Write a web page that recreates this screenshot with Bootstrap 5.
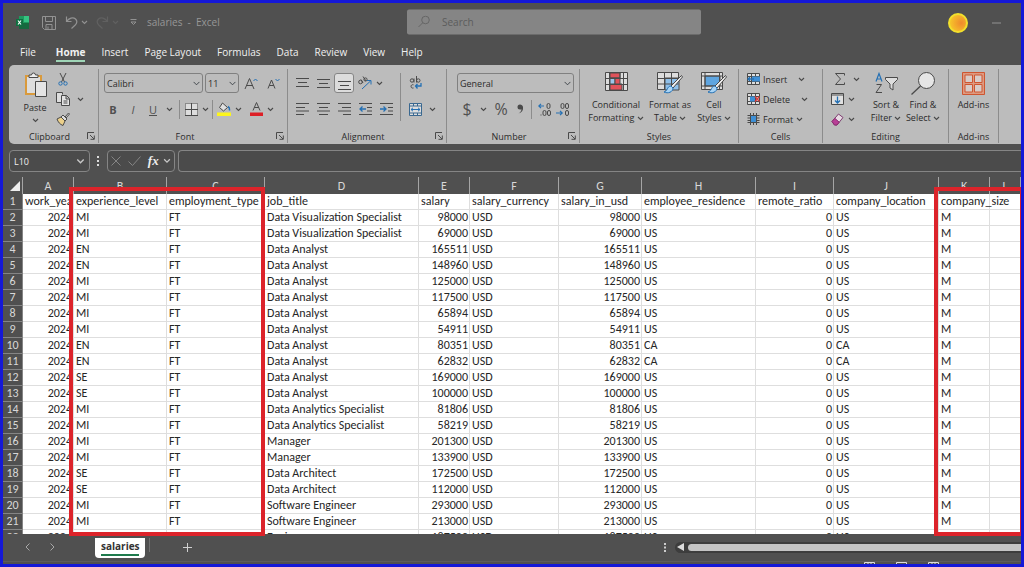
<!DOCTYPE html>
<html lang="en">
<head>
<meta charset="utf-8">
<meta name="viewport" content="width=device-width, initial-scale=1">
<title>salaries - Excel</title>
<link href="https://cdn.jsdelivr.net/npm/bootstrap@5.3.0/dist/css/bootstrap.min.css" rel="stylesheet">
<style>
  :root { --dark: #505050; --ribbon: #bcbcbc; --edge: #1418d8; --ink: #2b2b2b; --mark: #dc232a; }
  body { background: var(--dark); font: 9px/13px "Open Sans", "Noto Sans", sans-serif; color: var(--ink); }
  .window { height: 100vh; border: 3px solid var(--edge); }
  svg { display: block; flex: none; fill: none; stroke: #4a4a4a; }
  .tool { border: 0; background: none; padding: 0; color: inherit; display: flex; flex: none; align-items: center; justify-content: center; line-height: 13px; }
  .w12 { width: 12px; } .w14 { width: 14px; } .w20 { width: 20px; } .w24 { width: 24px; }

  .titlebar { height: 39px; font-size: 10px; color: #979797; padding: 0 20px 0 13px; }
  .titlebar svg { stroke: #929292; }
  .searchbox { width: 294px; height: 25px; background: #858585; border-radius: 2px; padding: 0 11px; gap: 12px; margin: -1px 0 0 42px; }
  .searchbox svg { stroke: #666; }
  .searchbox input { background: none; border: 0; padding: 0; outline: 0; color: #555; font-size: 10px; }
  .searchbox input::placeholder { color: #5c5c5c; opacity: 1; }
  .avatar { width: 20px; height: 20px; border: 2px solid #f2e02c; background: radial-gradient(circle at 70% 50%, #ef8a2c, #f6c02a 75%); }

  .tabs { height: 23px; padding-left: 17px; gap: 16px; font-size: 10px; }
  .tabs a { color: #f1f1f1; text-decoration: none; line-height: 21px; height: 20px; border-bottom: 2px solid transparent; }
  .tabs a.active { font-weight: 700; border-color: #9fd5b7; }

  .ribbon { height: 79px; margin-left: 6px; background: var(--ribbon); border-radius: 5px 0 0 5px; overflow: hidden; }
  .group { border-right: 1px solid #8c8c8c; margin: 4px 0 1px; height: 74px; display: flex; flex-direction: column; flex: none; }
  .group-body { height: 61px; }
  .group-name { height: 13px; line-height: 13px; text-align: center; position: relative; }
  .launcher { position: absolute; right: 3px; top: 2px; }
  .line { height: 20px; }
  .stack { display: flex; flex-direction: column; gap: 6px; }
  .vrule { width: 1px; height: 19px; background: #8c8c8c; flex: none; }
  .pick { height: 20px; border: 1px solid #808080; border-radius: 3px; font-size: 9px; line-height: 13px; padding: 2px 12px 2px 2px; color: var(--ink); background-color: transparent; background-position: right 2px center; background-size: 7px 7px; }
  .number-body { padding: 4px 5px 0 10px; }
  .pressed { background: #dcdcdc; border: 1px solid #858585; border-radius: 3px; height: 20px; }
  .glyph { font-size: 11px; color: #505050; }
  .tall { flex-direction: column; justify-content: flex-start; gap: 7px; padding-top: 3px; }
  .cell-tools .tool { gap: 3px; justify-content: flex-start; }
  .indents { gap: 1px; }

  .formula { height: 23px; margin: 6px 0 4px 6px; gap: 3px; }
  .field { border: 1px solid #858585; border-radius: 4px; height: 22px; background: #4b4b4b; }
  .field input { background: none; border: 0; outline: 0; padding: 0; color: #eee; font-size: 9px; min-width: 0; }
  .formula svg { stroke: #c8c8c8; }
  .fx-mark { font: italic 700 13px "Liberation Serif", serif; color: #eee; }

  .sheet { min-height: 0; position: relative; }
  .clip { height: 100%; overflow: hidden; background: #fff; }
  .cells { table-layout: fixed; width: 100%; border-collapse: separate; border-spacing: 0; font: 12px/15px Calibri, Carlito, Lato, sans-serif; color: #262626; }
  .cells td, .cells thead th, .cells tbody th { height: 16px; padding: 0 2px; border-right: 1px solid #dedede; border-bottom: 1px solid #dedede; white-space: nowrap; overflow: hidden; font-weight: 400; }
  .cells td.spill { overflow: visible; }
  .cells thead th, .cells tbody th { background: var(--dark); color: #d8d8d8; text-align: center; border-color: #858585; }
  .cells thead th { border-bottom: 0; height: 17px; line-height: 16px; border-color: #a5a5a5; }
  .cells td.num { text-align: right; padding-right: 1px; }
  .frame { position: absolute; top: 10px; bottom: -2px; border: 4px solid var(--mark); pointer-events: none; z-index: 2; }
  .frame-level { left: 66px; width: 196px; }
  .frame-size { left: 931px; right: -3px; }

  .sheetbar { height: 27px; }
  .sheetbar svg { stroke: #a8a8a8; }
  .sheet-tab { height: 20px; width: 50px; background: #fff; border-radius: 0 0 4px 4px; border: 0; font-size: 10px; font-weight: 700; color: #333; padding: 0 6px; }
  .sheet-tab span { display: block; border-bottom: 2px solid #1e7b4d; line-height: 15px; margin-top: -1px; }
  .track { height: 11px; background: #3d3d3d; border-radius: 6px 0 0 6px; padding: 2px 0 2px 2px; }
  .thumb { height: 7px; background: #c4c4c4; border-radius: 4px 0 0 4px; }
  .status { height: 3px; overflow: hidden; border-top: 1px solid #5c5c5c; gap: 21px; padding-right: 82px; }
  .status svg { stroke: #ddd; }
</style>
</head>
<body>
<svg width="0" height="0" class="position-absolute" aria-hidden="true">
  <symbol id="chev" viewBox="0 0 7 5"><path d="M1 1l2.5 2.5L6 1" stroke-width="1.1"/></symbol>
  <symbol id="launch" viewBox="0 0 8 8"><path d="M.5 7V.5H7M3 3l4 4M7.3 3.5v3.8H3.5"/></symbol>
</svg>
<div class="window d-flex flex-column overflow-hidden">

  <header class="titlebar d-flex align-items-center position-relative flex-shrink-0">
    <svg width="13" height="13" viewBox="0 0 13 13" style="stroke:none"><path d="M3 0h10v13H3z" fill="#1f9a5e"/><path d="M8 0h5v6H8z" fill="#35c481"/><path d="M3 7h10v6H3z" fill="#17693f"/><path d="M0 3h7v7H0z" fill="#0f7040"/><path d="M2 4.500l3 4M5 4.500l-3 4" stroke="#fff" stroke-width="1.1"/></svg>
    <button class="tool ms-2 w24" aria-label="Save"><svg width="14" height="14" viewBox="0 0 14 14"><path d="M.5.5h13v13h-11l-2-2zM3.500.5v5h7v-5M4 13.500v-5h6v5M6 10.500v3"/></svg></button>
    <button class="tool w20" aria-label="Undo"><svg width="13" height="13" viewBox="0 0 13 13"><path d="M1.500.5v5h5M1.500 5.500C4 2 8 .8 10.500 3c2 2 1.500 4.300-.5 6.300L6.500 12.500" stroke-width="1.2"/></svg></button>
    <button class="tool" aria-label="Undo list"><svg width="7" height="5"><use href="#chev"/></svg></button>
    <button class="tool w20 ms-1 opacity-25" aria-label="Redo"><svg width="13" height="13" viewBox="0 0 13 13"><path d="M11.500.5v5h-5M11.500 5.500C9 2 5 .8 2.500 3c-2 2-1.500 4.300.5 6.300L6.500 12.500" stroke-width="1.2"/></svg></button>
    <button class="tool opacity-25" aria-label="Redo list"><svg width="7" height="5"><use href="#chev"/></svg></button>
    <button class="tool ms-1 w20" aria-label="Customize"><svg width="7" height="7" viewBox="0 0 7 7"><path d="M.5.5h6M1 3h5L3.500 5.500z"/></svg></button>
    <span class="ps-1">salaries&nbsp; -&nbsp; Excel</span>
    <label class="searchbox d-flex align-items-center position-absolute start-50 top-50 translate-middle">
      <svg width="12" height="12" viewBox="0 0 12 12"><circle cx="7.500" cy="4.500" r="3.800"/><path d="M4.700 7.300L.5 11.500"/></svg>
      <input type="search" placeholder="Search" class="flex-fill" aria-label="Search">
    </label>
    <span class="avatar rounded-circle ms-auto"></span>
    <button class="tool ms-4" aria-label="Minimize"><svg width="9" height="2" viewBox="0 0 9 2"><path d="M0 1h9"/></svg></button>
  </header>

  <nav class="tabs d-flex flex-shrink-0">
    <a href="#" class="me-1">File</a><a href="#" class="active">Home</a><a href="#">Insert</a><a href="#">Page Layout</a><a href="#">Formulas</a><a href="#">Data</a><a href="#">Review</a><a href="#">View</a><a href="#">Help</a>
  </nav>

  <section class="ribbon d-flex flex-shrink-0">
    <div class="group" style="width:90px">
      <div class="group-body d-flex">
        <button class="tool tall ms-2 gap-1" style="width:36px">
          <svg width="23" height="25" viewBox="0 0 23 25"><path d="M2 4h15v18H2z" fill="#ddd" stroke="#d99a3c" stroke-width="2"/><path d="M5 5.500V3h2.500a2 2 0 0 1 4 0H14v2.500z" fill="#eee"/><path d="M11.500 9.500h11v15h-11z" fill="#e4e4e4"/></svg>
          <span>Paste</span><svg width="7" height="5"><use href="#chev"/></svg>
        </button>
        <div class="d-flex flex-column">
          <button class="tool w20 line" aria-label="Cut"><svg width="10" height="13" viewBox="0 0 10 13"><path d="M2 0l4.500 9M8 0L3.500 9"/><circle cx="2.500" cy="10.500" r="1.700" stroke="#2470b4"/><circle cx="7.500" cy="10.500" r="1.700" stroke="#2470b4"/></svg></button>
          <div class="d-flex line"><button class="tool w20" aria-label="Copy"><svg width="14" height="14" viewBox="0 0 14 14"><path d="M5 10.500H.5V.5h6v2" fill="#ddd"/><path d="M5.500 3.500h5l3 3v7h-8zM10 3.500v3.500h3M7.500 9h4M7.500 11h4" fill="#e4e4e4"/></svg></button><button class="tool w14" aria-label="Copy options"><svg width="7" height="5"><use href="#chev"/></svg></button></div>
          <button class="tool w20 line" aria-label="Format painter"><svg width="14" height="14" viewBox="0 0 14 14"><path d="M1 7l4-2 4 4-2 4.500C4 12.500 2 10 1 7z" fill="#ecd08a"/><path d="M5 5l2-2 4 4-2 2zM9 5l3.500-4 1 1L10 6" fill="#ddd"/></svg></button>
        </div>
      </div>
      <div class="group-name pe-2">Clipboard<button class="tool launcher" aria-label="Clipboard settings"><svg width="8" height="8"><use href="#launch"/></svg></button></div>
    </div>

    <div class="group" style="width:189px">
      <div class="group-body ps-1 stack pt-1">
        <div class="d-flex line align-items-center">
          <select class="form-select pick" style="width:99px;margin-left:1px" aria-label="Font"><option>Calibri</option></select>
          <select class="form-select pick" style="width:34px;margin-left:2px" aria-label="Font size"><option>11</option></select>
          <button class="tool w24" aria-label="Grow font"><svg width="14" height="13" viewBox="0 0 14 13"><path d="M1 12L5.500 1.500 10 12M2.800 8.500h5.500"/><path d="M9.500 4l2-2 2 2" stroke="#2470b4"/></svg></button>
          <button class="tool w20" aria-label="Shrink font"><svg width="13" height="12" viewBox="0 0 13 12"><path d="M1 11.500L4.500 3 8 11.500M2.300 8.500h4.500"/><path d="M8.500 2l2 2 2-2" stroke="#2470b4"/></svg></button>
        </div>
        <div class="d-flex line align-items-center">
          <button class="tool w20 glyph fw-bold">B</button><button class="tool w20 glyph fst-italic">I</button><button class="tool w20 glyph text-decoration-underline">U</button><button class="tool w12" aria-label="Underline styles"><svg width="7" height="5"><use href="#chev"/></svg></button>
          <span class="vrule mx-1"></span>
          <button class="tool w14" aria-label="Borders"><svg width="13" height="13" viewBox="0 0 13 13"><path d="M.5.5h12v12H.5z" fill="#ddd" stroke-dasharray="1 1"/><path d="M0 6.500h13M6.500 0v13M0 12.500h13"/></svg></button><button class="tool w14" aria-label="Border styles"><svg width="7" height="5"><use href="#chev"/></svg></button>
          <span class="vrule me-1"></span>
          <button class="tool w14" aria-label="Fill color"><svg width="14" height="14" viewBox="0 0 14 14"><path d="M5.500 1l5 4.500-4 3.500-4-3.500z" fill="#e0e0e0"/><path d="M11 4.500c2 1 1.500 3 1.500 4" stroke="#2470b4" stroke-width="1.500"/><path d="M0 10.500h14v3.500H0z" fill="#fcf51c" stroke="none"/></svg></button><button class="tool w14" aria-label="Fill colors"><svg width="7" height="5"><use href="#chev"/></svg></button>
          <button class="tool w14 ms-1" aria-label="Font color"><svg width="13" height="14" viewBox="0 0 13 14"><path d="M3 8.500l3.500-8 3.500 8M4.300 5.500h4.500"/><path d="M0 10.500h13v3.500H0z" fill="#dd1f26" stroke="none"/></svg></button><button class="tool w14" aria-label="Font colors"><svg width="7" height="5"><use href="#chev"/></svg></button>
        </div>
      </div>
      <div class="group-name pe-3">Font<button class="tool launcher" aria-label="Font settings"><svg width="8" height="8"><use href="#launch"/></svg></button></div>
    </div>

    <div class="group" style="width:159px">
      <div class="group-body d-flex ps-1 pt-1">
        <div class="stack">
          <div class="d-flex line align-items-center indents">
            <button class="tool w20" aria-label="Top align"><svg width="13" height="13" viewBox="0 0 13 13"><path d="M0 1.500h13M2 5.500h9M0 9.500h13"/></svg></button>
            <button class="tool w20" aria-label="Middle align"><svg width="13" height="13" viewBox="0 0 13 13"><path d="M0 2.500h13M2 6.500h9M0 10.500h13"/></svg></button>
            <button class="tool w20 pressed" aria-label="Bottom align"><svg width="13" height="13" viewBox="0 0 13 13"><path d="M0 4.500h13M2 8.500h9M0 12.500h13"/></svg></button>
            <button class="tool w20" aria-label="Orientation"><svg width="14" height="14" viewBox="0 0 14 14"><circle cx="2.500" cy="6" r="1.800"/><path d="M3 3.500L5 7M5 .5l3 4.500"/><circle cx="7.500" cy="3.500" r="1.600"/><path d="M4 13l8.500-8M9 4.500h4v4" stroke="#2470b4"/></svg></button>
            <button class="tool" aria-label="Orientation list"><svg width="7" height="5"><use href="#chev"/></svg></button>
          </div>
          <div class="d-flex line align-items-center indents">
            <button class="tool w20" aria-label="Align left"><svg width="13" height="12" viewBox="0 0 13 12"><path d="M0 .5h13M0 4.500h9M0 8h13M0 11.500h8"/></svg></button>
            <button class="tool w20" aria-label="Center"><svg width="13" height="12" viewBox="0 0 13 12"><path d="M0 .5h13M2 4.500h9M0 8h13M2 11.500h9"/></svg></button>
            <button class="tool w20" aria-label="Align right"><svg width="13" height="12" viewBox="0 0 13 12"><path d="M0 .5h13M4 4.500h9M0 8h13M5 11.500h8"/></svg></button>
            <button class="tool w20" aria-label="Decrease indent"><svg width="13" height="12" viewBox="0 0 13 12"><path d="M0 .5h13M8 4.500h5M8 8h5M0 11.500h13"/><path d="M7 6H1M3.500 3.500L1 6l2.500 2.500" stroke="#2470b4" stroke-width="1.300"/></svg></button>
            <button class="tool w20" aria-label="Increase indent"><svg width="13" height="12" viewBox="0 0 13 12"><path d="M0 .5h13M8 4.500h5M8 8h5M0 11.500h13"/><path d="M0 6h6M3.500 3.500L6 6 3.500 8.500" stroke="#2470b4" stroke-width="1.300"/></svg></button>
          </div>
        </div>
        <span class="vrule ms-1" style="height:48px"></span>
        <div class="stack ms-1">
          <div class="line d-flex"><button class="tool w20" aria-label="Wrap text"><svg width="13" height="14" viewBox="0 0 13 14"><circle cx="3" cy="4.500" r="1.700"/><path d="M5 2.500v4M7.500 0v6.500"/><circle cx="9.300" cy="4.500" r="1.700"/><path d="M4.500 8.800c-3-1-3.500 4 0 3.200"/><path d="M12 7v3H6.500M8.500 8l-2 2 2 2.500" stroke="#2470b4" stroke-width="1.300"/></svg></button></div>
          <div class="line d-flex align-items-center"><button class="tool w20" aria-label="Merge"><svg width="13" height="13" viewBox="0 0 13 13"><path d="M.5.5h12v12H.5zM.5 3h12M.5 10h12M4.500.5V3M8.500.5V3M4.500 10v2.500M8.500 10v2.500" fill="#ddd" stroke="#3a6890"/><path d="M2 6.500h9M4 4.800L2 6.500l2 1.700M9 4.800l2 1.700-2 1.700" stroke="#2470b4"/></svg></button><button class="tool w14" aria-label="Merge options"><svg width="7" height="5"><use href="#chev"/></svg></button></div>
        </div>
      </div>
      <div class="group-name pe-2">Alignment<button class="tool launcher" aria-label="Alignment settings"><svg width="8" height="8"><use href="#launch"/></svg></button></div>
    </div>

    <div class="group" style="width:133px">
      <div class="group-body number-body stack">
        <select class="form-select pick flex-shrink-0" aria-label="Number format"><option>General</option></select>
        <div class="d-flex line align-items-center">
          <button class="tool w20 fs-6 glyph">$</button><button class="tool w12" aria-label="Currencies"><svg width="7" height="5"><use href="#chev"/></svg></button><button class="tool w24 fs-6 glyph">%</button>
          <button class="tool w14" aria-label="Comma style"><svg width="7" height="10" viewBox="0 0 7 10"><path d="M3 .5a2.500 2.500 0 0 0 0 5c1 0 1.500-.3 1.500-.3C4.500 7 3 8.500 1.500 9.500 5 8.500 6.500 6 6 3 5.800 1.500 4.500.5 3 .5z" fill="#4a4a4a" stroke="none"/></svg></button>
          <span class="vrule ms-1"></span>
          <button class="tool w24" aria-label="Increase decimal"><svg width="13" height="13" viewBox="0 0 13 13"><path d="M6 3H.8M3 .8L.8 3 3 5.200" stroke="#2470b4" stroke-width="1.200"/><rect x="9" y=".5" width="3" height="5" rx="1.500"/><rect x="5" y="7.500" width="3" height="5" rx="1.500"/><rect x="9.500" y="7.500" width="3" height="5" rx="1.500"/><path d="M3 11.500v1"/></svg></button>
          <button class="tool" aria-label="Decrease decimal"><svg width="13" height="13" viewBox="0 0 13 13"><path d="M0 10h6M4 7.800L6.200 10 4 12.200" stroke="#2470b4" stroke-width="1.200"/><rect x="5" y=".5" width="3" height="5" rx="1.500"/><rect x="9.500" y=".5" width="3" height="5" rx="1.500"/><rect x="9.500" y="7.500" width="3" height="5" rx="1.500"/></svg></button>
        </div>
      </div>
      <div class="group-name pe-2">Number<button class="tool launcher" aria-label="Number settings"><svg width="8" height="8"><use href="#launch"/></svg></button></div>
    </div>

    <div class="group" style="width:159px">
      <div class="group-body d-flex ps-2">
        <button class="tool tall" style="width:56px"><svg width="23" height="19" viewBox="0 0 23 19"><path d="M.5.5h22v18H.5z" fill="#ddd"/><path d="M5 1h10v5H5zM5 12h12v6H5z" fill="#e0525a"/><path d="M5 6h5v6H5z" fill="#9cc6ea"/><path d="M10 6h5v6h-5z" fill="#e0525a"/><path d="M.5 6.500h22M.5 12.500h22M4.500.5v18M18.500.5v18M15 .5v6"/></svg><span>Conditional<br>Formatting <svg class="d-inline-block" width="7" height="5"><use href="#chev"/></svg></span></button>
        <button class="tool tall" style="width:52px"><svg width="26" height="22" viewBox="0 0 26 22" style="margin-bottom:-3px"><path d="M.5.5h21v17H.5z" fill="#ddd"/><path d="M8 6h14v12H8z" fill="#8fc0ea"/><path d="M.5 6.500h21M.5 12h21M7.500.5v17M14.500.5v17"/><path d="M24.500 3.500L14 14l2 2L25.500 5z" fill="#eee"/><path d="M14 14c-4 0-3 5-7 6 4 2 9 0 9-4z" fill="#a9d4f5" stroke="#2470b4"/></svg><span>Format as<br>Table <svg class="d-inline-block" width="7" height="5"><use href="#chev"/></svg></span></button>
        <button class="tool tall" style="width:36px"><svg width="26" height="22" viewBox="0 0 26 22" style="margin-bottom:-3px"><path d="M.5.5h21v17H.5z" fill="#ddd"/><path d="M4 4h15v10H4z" fill="#5ea5e0"/><path d="M.5 4h21M.5 14h21M4 .5v17M18.500.5v17"/><path d="M24.500 3.500L14 14l2 2L25.500 5z" fill="#eee"/><path d="M14 14c-4 0-3 5-7 6 4 2 9 0 9-4z" fill="#a9d4f5" stroke="#2470b4"/></svg><span>Cell<br>Styles <svg class="d-inline-block" width="7" height="5"><use href="#chev"/></svg></span></button>
      </div>
      <div class="group-name">Styles</div>
    </div>

    <div class="group" style="width:84px">
      <div class="group-body ps-2 d-flex flex-column cell-tools">
        <button class="tool line"><svg width="13" height="12" viewBox="0 0 13 12"><path d="M.5.5h12v11H.5zM.5 3.500h12M.5 8.500h12M4.500.5v11M8.500.5v11" fill="#ddd"/><path d="M5 3.500h8v5H5z" fill="#3d8fd6" stroke="none"/><path d="M7 6H1M3 4L1 6l2 2" stroke="#2470b4" stroke-width="1.300"/></svg>Insert<svg class="ms-2" width="7" height="5"><use href="#chev"/></svg></button>
        <button class="tool line"><svg width="13" height="12" viewBox="0 0 13 12"><path d="M.5.5h12v11H.5zM.5 3.500h12M.5 8.500h12M4.500.5v11M8.500.5v11" fill="#ddd"/><path d="M3 3.500h5v5H3z" fill="#3d8fd6" stroke="none"/><path d="M8 3.500l4.500 5M12.500 3.500l-4.500 5" stroke="#d93b3b" stroke-width="1.300"/></svg>Delete<svg class="ms-2" width="7" height="5"><use href="#chev"/></svg></button>
        <button class="tool line"><svg width="13" height="12" viewBox="0 0 13 12"><path d="M.5 2.500h12M.5 9.500h12M3.500 0v12M9.500 0v12M.5 5h3M9.500 5h3M.5 7.500h3M9.500 7.500h3M6.500 0v2.500M6.500 9.500V12"/><path d="M3.500 2.500h6v7h-6z" fill="#3d8fd6"/></svg>Format<svg width="7" height="5"><use href="#chev"/></svg></button>
      </div>
      <div class="group-name">Cells</div>
    </div>

    <div class="group" style="width:126px">
      <div class="group-body d-flex">
        <div class="d-flex flex-column ms-2" style="width:36px">
          <button class="tool line justify-content-start gap-2" aria-label="Sum"><svg class="ms-1" width="10" height="12" viewBox="0 0 10 12"><path d="M9.500 2.500v-2h-9l5 5.500-5 5.500h9v-2"/></svg><svg width="7" height="5"><use href="#chev"/></svg></button>
          <button class="tool line justify-content-start gap-1" aria-label="Fill"><svg width="13" height="12" viewBox="0 0 13 12"><path d="M.5.5h12v11H.5zM.5 2h12" fill="#e0e0e0"/><path d="M6.500 3.500V10M4 7.500L6.500 10 9 7.500" stroke="#2470b4" stroke-width="1.300"/></svg><svg width="7" height="5"><use href="#chev"/></svg></button>
          <button class="tool line justify-content-start gap-1" aria-label="Clear"><svg width="13" height="13" viewBox="0 0 13 13"><path d="M1 8.500L7.500 1l4.500 3.500L6 12H3.500z" fill="#e8dbe4" stroke="#7d3d70"/><path d="M1 8.500L3.800 5.300 8.200 9.200 6 12H3.500z" fill="#b83f96" stroke="#8a2c70"/></svg><svg width="7" height="5"><use href="#chev"/></svg></button>
        </div>
        <button class="tool tall" style="width:38px"><svg width="23" height="22" viewBox="0 0 23 22" style="margin-bottom:-3px"><path d="M1 9.500L4 1.500l3 8M2 7h4" stroke="#2470b4" stroke-width="1.200"/><path d="M1.500 12.500h5l-5.500 8h6"/><path d="M10.500 5.500h12v2L18 12v6l-3-2v-4l-4.500-4.500z" fill="#ddd"/></svg><span>Sort &amp;<br>Filter <svg class="d-inline-block" width="7" height="5"><use href="#chev"/></svg></span></button>
        <button class="tool tall" style="width:36px"><svg width="24" height="23" viewBox="0 0 24 23" style="margin-bottom:-4px"><circle cx="15.500" cy="8.500" r="8" fill="#e6e6e6"/><path d="M9.500 14L.5 22.500" stroke-width="1.300"/></svg><span>Find &amp;<br>Select <svg class="d-inline-block" width="7" height="5"><use href="#chev"/></svg></span></button>
      </div>
      <div class="group-name">Editing</div>
    </div>

    <div class="group" style="width:50px">
      <div class="group-body d-flex justify-content-center">
        <button class="tool tall"><svg width="23" height="23" viewBox="0 0 23 23" style="stroke:#cf5530;margin-bottom:-4px"><path d="M.5.5h22v22H.5z" fill="#dd9a80"/><path d="M3 3h7.500v7.500H3zM12.500 3H20v7.500h-7.500zM3 12.500h7.500V20H3zM12.500 12.500H20V20h-7.500z" fill="#d8ccc8"/></svg><span>Add-ins</span></button>
      </div>
      <div class="group-name">Add-ins</div>
    </div>
  </section>

  <section class="formula d-flex align-items-start flex-shrink-0">
    <div class="field d-flex align-items-center px-1" style="width:81px"><input type="text" value="L10" aria-label="Name box" class="flex-fill"><svg width="9" height="7"><use href="#chev"/></svg></div>
    <svg class="mx-1 mt-1" width="3" height="13" viewBox="0 0 3 13" style="fill:#ddd;stroke:none"><path d="M0 2h2v2H0zM0 6h2v2H0zM0 10h2v2H0z"/></svg>
    <div class="field d-flex align-items-center justify-content-around" style="width:68px">
      <button class="tool" aria-label="Cancel"><svg width="10" height="10" viewBox="0 0 10 10" style="stroke:#858585"><path d="M.5.5l9 9M9.500.5l-9 9"/></svg></button>
      <button class="tool" aria-label="Enter"><svg width="13" height="10" viewBox="0 0 13 10" style="stroke:#858585"><path d="M.5 5.500l4 4 8-9"/></svg></button>
      <button class="tool gap-1"><span class="fx-mark">fx</span><svg width="8" height="6"><use href="#chev"/></svg></button>
    </div>
    <div class="field flex-fill d-flex rounded-end-0 border-end-0"><input type="text" class="flex-fill px-2" aria-label="Formula"></div>
  </section>

  <main class="sheet flex-fill">
    <div class="clip">
      <table class="cells">
        <colgroup id="widths"></colgroup>
        <thead><tr id="letters"><th scope="col"><svg class="ms-auto" width="10" height="10" viewBox="0 0 10 10" style="fill:#eee;stroke:none"><path d="M10 0v10H0z"/></svg></th></tr></thead>
        <tbody id="rows"></tbody>
      </table>
    </div>
    <div class="frame frame-level"></div>
    <div class="frame frame-size"></div>
  </main>

  <footer class="flex-shrink-0">
    <div class="sheetbar d-flex">
      <div class="d-flex align-items-center gap-3 ms-3" style="height:26px;width:76px;padding-left:6px">
        <button class="tool" aria-label="Previous sheet"><svg width="5" height="8" viewBox="0 0 5 8"><path d="M4.500.5L1 4l3.500 3.500"/></svg></button>
        <button class="tool ms-1" aria-label="Next sheet"><svg width="5" height="8" viewBox="0 0 5 8"><path d="M.5.5L4 4 .5 7.500"/></svg></button>
      </div>
      <button class="sheet-tab mt-1"><span>salaries</span></button>
      <span class="vrule mt-1 ms-1" style="background:#707070;height:14px"></span>
      <button class="tool" style="margin-left:33px;height:26px" aria-label="New sheet"><svg width="9" height="9" viewBox="0 0 9 9" style="stroke:#d0d0d0"><path d="M4.500 0v9M0 4.500h9"/></svg></button>
      <div class="d-flex align-items-center ms-auto gap-2" style="height:26px;width:357px">
        <svg width="3" height="9" viewBox="0 0 3 9" style="fill:#ccc;stroke:none"><path d="M0 0h2v2H0zM0 3.500h2v2H0zM0 7h2v2H0z"/></svg>
        <div class="track flex-fill d-flex align-items-center gap-1"><svg width="7" height="8" viewBox="0 0 7 8" style="fill:#ddd;stroke:none"><path d="M7 0v8L0 4z"/></svg><div class="thumb flex-fill"></div></div>
      </div>
    </div>
    <div class="status d-flex justify-content-end">
      <svg width="11" height="9" viewBox="0 0 11 9"><path d="M.5.5h10v8H.5zM4 .5v8M7 .5v8M.5 4.500h10"/></svg>
      <svg width="11" height="9" viewBox="0 0 11 9"><path d="M.5.5h10v8H.5z"/></svg>
      <svg width="11" height="9" viewBox="0 0 11 9"><path d="M.5.5h10v8H.5zM4 .5v4M7 .5v4"/></svg>
    </div>
  </footer>
</div>

<script src="https://cdn.jsdelivr.net/npm/bootstrap@5.3.0/dist/js/bootstrap.bundle.min.js"></script>
<script>
  const widths = [20, 51, 93, 98, 154, 51, 89, 83, 114, 78, 105, 51, 0];
  document.getElementById('widths').innerHTML =
    widths.map(w => w ? `<col style="width:${w}px">` : '<col>').join('');
  document.getElementById('letters').insertAdjacentHTML('beforeend',
    [...'ABCDEFGHIJKL'].map(c => `<th scope="col">${c}</th>`).join(''));

  const heads = ['work_year', 'experience_level', 'employment_type', 'job_title', 'salary', 'salary_currency',
    'salary_in_usd', 'employee_residence', 'remote_ratio', 'company_location', 'company_size', ''];
  const people = [
    ['MI', 'Data Visualization Specialist', 98000, 'US'], ['MI', 'Data Visualization Specialist', 69000, 'US'],
    ['EN', 'Data Analyst', 165511, 'US'], ['EN', 'Data Analyst', 148960, 'US'],
    ['MI', 'Data Analyst', 125000, 'US'], ['MI', 'Data Analyst', 117500, 'US'],
    ['MI', 'Data Analyst', 65894, 'US'], ['MI', 'Data Analyst', 54911, 'US'],
    ['EN', 'Data Analyst', 80351, 'CA'], ['EN', 'Data Analyst', 62832, 'CA'],
    ['SE', 'Data Analyst', 169000, 'US'], ['SE', 'Data Analyst', 100000, 'US'],
    ['MI', 'Data Analytics Specialist', 81806, 'US'], ['MI', 'Data Analytics Specialist', 58219, 'US'],
    ['MI', 'Manager', 201300, 'US'], ['MI', 'Manager', 133900, 'US'],
    ['SE', 'Data Architect', 172500, 'US'], ['SE', 'Data Architect', 112000, 'US'],
    ['MI', 'Software Engineer', 293000, 'US'], ['MI', 'Software Engineer', 213000, 'US'],
    ['SE', 'Engineer', 187500, 'US']
  ];
  const lines = [heads, ...people.map(([level, job, pay, land]) =>
    [2024, level, 'FT', job, pay, 'USD', pay, land, 0, land, 'M', ''])];
  document.getElementById('rows').innerHTML = lines.map((line, i) =>
    `<tr><th scope="row">${i + 1}</th>` + line.map((v, c) =>
      `<td class="${typeof v === 'number' ? 'num' : i === 0 && c === 10 ? 'spill' : ''}">${v}</td>`).join('') + '</tr>').join('');
</script>
</body>
</html>
